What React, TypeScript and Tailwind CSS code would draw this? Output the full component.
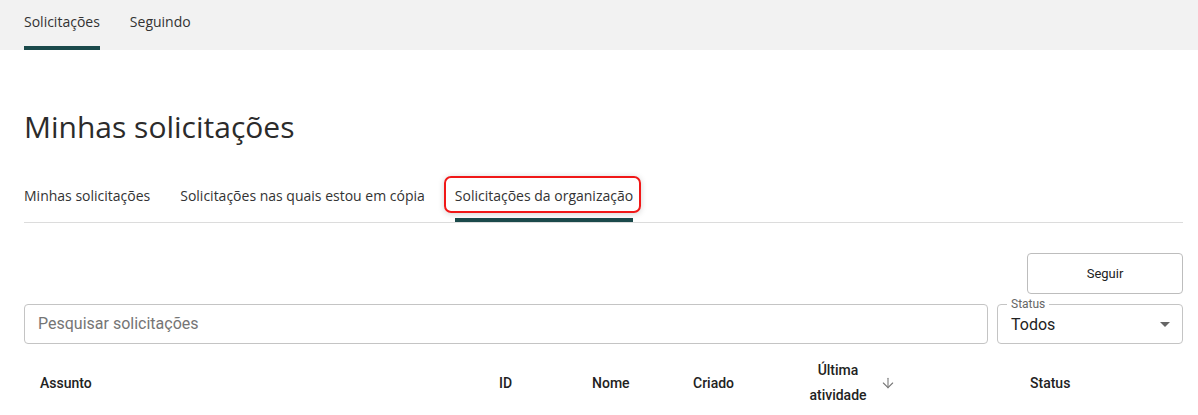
import { ArrowDown } from 'lucide-react'

const OPEN = { fontFamily: '"Open Sans", "Noto Sans", sans-serif' }
const ROBOTO = { fontFamily: 'Roboto, "Liberation Sans", sans-serif' }

function TopNav() {
  return (
    <div className="h-[50px] bg-[#f2f2f2] flex items-stretch gap-[30px] px-6" style={OPEN}>
      <div className="flex flex-col justify-between">
        <span className="pt-[12px] text-[14px] text-[#333] leading-5">Solicitações</span>
        <span className="h-[4px] bg-[#1b4a4b]" />
      </div>
      <div className="flex flex-col">
        <span className="pt-[12px] text-[14px] text-[#333] leading-5">Seguindo</span>
      </div>
    </div>
  )
}

function Tabs() {
  return (
    <div className="flex items-end border-b border-[#dcdcdc] text-[14px] text-[#333]" style={OPEN}>
      <div className="pb-[16px] pr-[30px]">Minhas solicitações</div>
      <div className="pb-[16px] pr-[30px]">Solicitações nas quais estou em cópia</div>
      <div className="flex flex-col relative">
        <span className="absolute -left-[11px] -right-[8px] -top-[9px] h-[37px] rounded-[7px] border-2 border-[#f01818] shadow-[0_1px_6px_rgba(0,0,0,0.18)]" />
        <span className="pb-[12px]">Solicitações da organização</span>
        <span className="h-[4px] bg-[#1b4a4b]" />
      </div>
    </div>
  )
}

function Header({ label, className }: { label: string; className: string }) {
  return <div className={`text-[14px] font-medium text-[#222] ${className}`}>{label}</div>
}

export default function App() {
  return (
    <div className="w-[1198px] h-[415px] bg-white overflow-hidden">
      <TopNav />
      <div className="pl-6 pr-[15px]">
        <h1 className="mt-[57px] text-[30px] leading-[40px] text-[#2b2b2b] font-normal" style={OPEN}>
          Minhas solicitações
        </h1>
        <div className="mt-[38px]">
          <Tabs />
        </div>
        <div className="flex justify-end mt-[30px]" style={ROBOTO}>
          <button className="w-[156px] h-[41px] border border-[#bdbdbd] rounded-[4px] text-[13px] text-[#222]">
            Seguir
          </button>
        </div>
        <div className="flex gap-[9px] mt-[10px]" style={ROBOTO}>
          <div className="flex-1 h-[40px] border border-[#c4c4c4] rounded-[4px] flex items-center px-[13px] text-[16px] text-[#757575]">
            Pesquisar solicitações
          </div>
          <div className="relative w-[186px] h-[40px] border border-[#c4c4c4] rounded-[4px] flex items-center justify-between pl-[13px] pr-[12px]">
            <span className="absolute left-[9px] -top-[8px] bg-white px-[4px] text-[12px] leading-[14px] text-[#666]">
              Status
            </span>
            <span className="text-[16px] text-[#222] pt-[2px]">Todos</span>
            <svg width="10" height="5" viewBox="0 0 10 5" className="mt-[1px]">
              <path d="M0 0h10L5 5z" fill="#666" />
            </svg>
          </div>
        </div>
        <div className="flex items-center mt-[11px] h-[56px]" style={ROBOTO}>
          <Header label="Assunto" className="pl-4 w-[475px]" />
          <Header label="ID" className="w-[93px]" />
          <Header label="Nome" className="w-[101px]" />
          <Header label="Criado" className="w-[100px]" />
          <div className="w-[150px] flex items-center">
            <div className="w-[90px] text-center text-[14px] font-medium text-[#222] leading-[25px]">
              Última atividade
            </div>
            <ArrowDown size={16} strokeWidth={1.6} className="text-[#777] -ml-[3px]" />
          </div>
          <Header label="Status" className="ml-[87px]" />
        </div>
      </div>
    </div>
  )
}
